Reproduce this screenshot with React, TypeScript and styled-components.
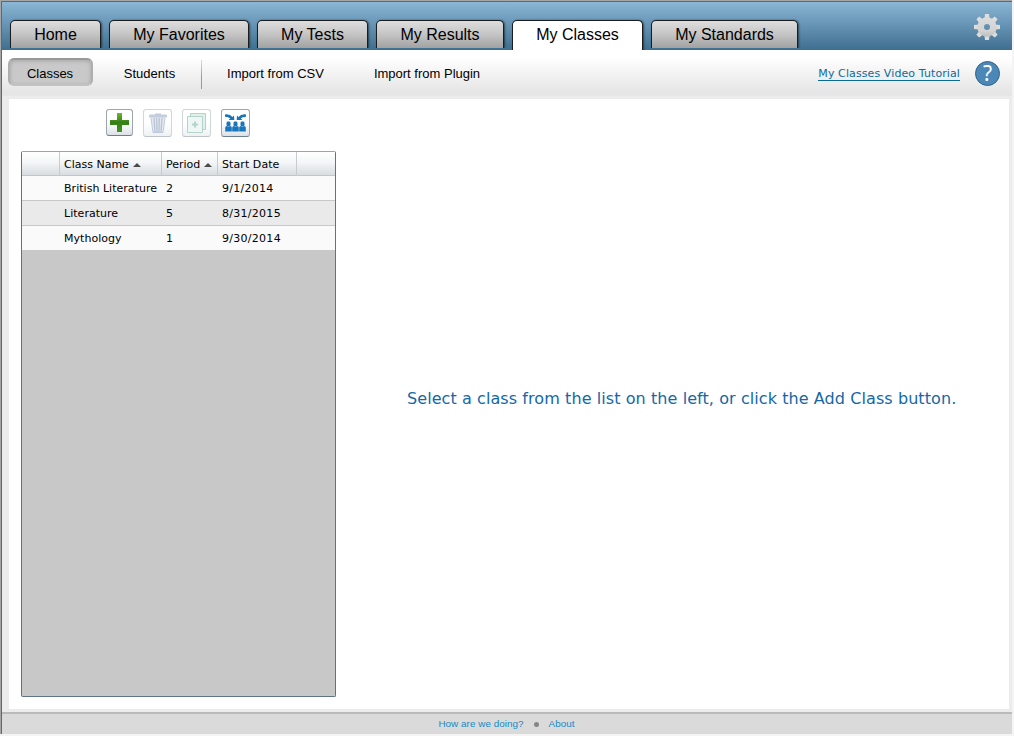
import React from "react";
import styled, { createGlobalStyle, css } from "styled-components";

const GlobalStyle = createGlobalStyle`
  *, *::before, *::after { box-sizing: border-box; }
  html, body { margin: 0; padding: 0; background: #f4f4f4; }
  body { font-family: "Liberation Sans", Arial, sans-serif; color: #000; }
`;

const verdana = css`
  font-family: "DejaVu Sans", Verdana, sans-serif;
`;

const Frame = styled.div`
  width: 1012px;
  height: 734px;
  border-top: 1px solid #a6a6a6;
  border-left: 1px solid #a6a6a6;
`;

const Window = styled.div`
  display: flex;
  flex-direction: column;
  width: 1011px;
  height: 733px;
  border-top: 1px solid #666;
  border-left: 1px solid #666;
  background: #ececec;
`;

const Header = styled.header`
  display: flex;
  justify-content: space-between;
  height: 48px;
  padding: 18px 11px 0 8px;
  background: linear-gradient(#8bb6d6, #3e6e90);
`;

const Tabs = styled.nav`
  display: flex;
  gap: 8px;
`;

const Tab = styled.button<{ $width: number; $active?: boolean }>`
  width: ${(p) => p.$width}px;
  height: ${(p) => (p.$active ? 30 : 28)}px;
  padding: 0 0 ${(p) => (p.$active ? 2 : 0)}px;
  border: 1px solid #1c1c1c;
  border-bottom: 0;
  border-radius: 5px 5px 0 0;
  background: ${(p) => (p.$active ? "#fff" : "linear-gradient(#dedede, #c4c4c4 50%, #a2a2a2)")};
  box-shadow: 1px 0 2px rgba(0, 0, 0, 0.5);
  clip-path: inset(-3px -4px 0 -3px);
  font: 16px/26px "Liberation Sans", Arial, sans-serif;
  color: #000;
`;

const GearIcon = styled.svg`
  display: block;
  width: 28px;
  height: 28px;
  margin-top: -7px;
`;

const SubBar = styled.div`
  display: flex;
  align-items: flex-start;
  height: 46px;
  padding: 8px 11px 0 6px;
  background: linear-gradient(#fff 15%, #e6e6e6 90%);
`;

const SubItem = styled.button<{ $width: number; $selected?: boolean }>`
  width: ${(p) => p.$width}px;
  height: 28px;
  padding: 2px 0 0;
  border: 0;
  border-radius: 6px;
  background: none;
  font: 13px/28px "Liberation Sans", Arial, sans-serif;
  color: #000;
  white-space: nowrap;
  ${(p) =>
    p.$selected &&
    css`
      background: #c9c9c9;
      border: 2px solid #aeaeae;
      border-top-color: #999;
      border-bottom-color: #c2c2c2;
      padding: 2px 1px 0 0;
      line-height: 24px;
      box-shadow: inset 0 1px 4px rgba(0, 0, 0, 0.18);
    `}
`;

const Divider = styled.div`
  width: 1px;
  height: 29px;
  margin: 2px 0 0 -5px;
  background: linear-gradient(#ddd, #999 60%);
`;

const Tutorial = styled.a`
  ${verdana}
  margin: 8px 15px 0 auto;
  height: 15px;
  border-bottom: 1px solid #0b6b9e;
  font-size: 11px;
  line-height: 15px;
  letter-spacing: 0.1px;
  color: #0b6b9e;
`;

const Help = styled.button`
  width: 25px;
  height: 25px;
  margin: 3px 1px 0 0;
  padding: 0;
  border: 1px solid #2f638b;
  border-radius: 50%;
  background: #4b88b8;
  font: 21px/23px "Noto Sans", Verdana, sans-serif;
  color: #fff;
`;

const Content = styled.main`
  display: flex;
  width: 1000px;
  height: 610px;
  margin: 3px 0 0 7px;
  background: #fff;
`;

const ListPane = styled.section`
  width: 327px;
  padding: 10px 0 0 12px;
`;

const Toolbar = styled.div`
  display: flex;
  gap: 10px;
  height: 42px;
  padding-left: 85px;
`;

const ToolButton = styled.button<{ $width: number; $disabled?: boolean }>`
  display: grid;
  place-items: center;
  width: ${(p) => p.$width}px;
  height: ${(p) => (p.$width === 27 ? 27 : 28)}px;
  padding: 0;
  border: 1px solid #9aa6b2;
  border-bottom-color: #6d7e8c;
  border-radius: 3px;
  background: linear-gradient(#fff, #fff 50%, #dde1e6);
  opacity: ${(p) => (p.$disabled ? 0.45 : 1)};
`;

const Table = styled.div`
  ${verdana}
  width: 315px;
  height: 546px;
  border: 1px solid #5f7482;
  border-top-color: #98a5b0;
  border-radius: 2px;
  background: #c8c8c8;
  font-size: 11px;
`;

const columns = css`
  display: grid;
  grid-template-columns: 38px 102px 56px 79px 1fr;
`;

const HeadRow = styled.div`
  ${columns}
  height: 24px;
  border-bottom: 1px solid #c3c6c9;
  background: linear-gradient(#fff, #f4f6f7 45%, #d8dde2);
  line-height: 23px;
`;

const HeadCell = styled.div`
  display: flex;
  align-items: center;
  gap: 4px;
  padding: 1px 0 0 4px;
  border-right: 1px solid #c8cbce;
  white-space: nowrap;
  &:last-child { border-right: 0; }
`;

const Arrow = styled.span`
  width: 0;
  height: 0;
  border: 4px solid transparent;
  border-top: 0;
  border-bottom: 4px solid #4a4a4a;
`;

const Row = styled.div<{ $alt?: boolean }>`
  ${columns}
  height: 25px;
  border-bottom: 1px solid #c8c8c8;
  background: ${(p) => (p.$alt ? "#eaeaea" : "#fafafa")};
  line-height: 24px;
`;

const Cell = styled.div`
  padding: 1px 0 0 4px;
  white-space: nowrap;
`;

const Text = styled.span<{ $spacing?: number }>`
  letter-spacing: ${(p) => p.$spacing ?? 0}px;
`;

const Message = styled.section`
  ${verdana}
  flex: 1;
  padding: 289px 0 0 71px;
  font-size: 16px;
  line-height: 22px;
  white-space: nowrap;
  color: #1368a8;
`;

const Footer = styled.footer`
  display: flex;
  justify-content: center;
  align-items: center;
  gap: 10px;
  height: 22px;
  margin-top: 3px;
  padding: 0 1px 1px 0;
  border-top: 2px solid #bababa;
  background: #dadada;
  font-size: 9.9px;
  letter-spacing: 0.04px;
  color: #168ac6;
`;

const Dot = styled.span`
  width: 5px;
  height: 5px;
  margin-top: 2px;
  border-radius: 50%;
  background: #858585;
`;

const tabs = [
  { label: "Home", width: 91 },
  { label: "My Favorites", width: 140 },
  { label: "My Tests", width: 111 },
  { label: "My Results", width: 128 },
  { label: "My Classes", width: 131, active: true },
  { label: "My Standards", width: 147 },
];

const classes = [
  { name: "British Literature", period: "2", start: "9/1/2014" },
  { name: "Literature", period: "5", start: "8/31/2015" },
  { name: "Mythology", period: "1", start: "9/30/2014" },
];

const Gear = () => (
  <GearIcon viewBox="-14 -14 28 28">
    <defs>
      <linearGradient id="gear" x1="0" y1="-13" x2="0" y2="13" gradientUnits="userSpaceOnUse">
        <stop offset="0" stopColor="#dedede" />
        <stop offset="0.65" stopColor="#d3d3d3" />
        <stop offset="1" stopColor="#b4b4b4" />
      </linearGradient>
    </defs>
    <g fill="url(#gear)">
      {[0, 45, 90, 135, 180, 225, 270, 315].map((a) => (
        <path key={a} d="M-2.6-8L-2-13H2L2.6-8Z" transform={`rotate(${a})`} />
      ))}
      <path
        fillRule="evenodd"
        d="M0-9.7A9.7 9.7 0 1 1 0 9.7A9.7 9.7 0 1 1 0-9.7ZM0-3A3 3 0 1 0 0 3A3 3 0 1 0 0-3Z"
      />
    </g>
  </GearIcon>
);

const Plus = () => (
  <svg width="21" height="21" viewBox="0 0 21 21">
    <defs>
      <linearGradient id="plus" x1="0" y1="0" x2="0" y2="1">
        <stop offset="0" stopColor="#70b92e" />
        <stop offset="0.5" stopColor="#347f16" />
        <stop offset="1" stopColor="#3f961d" />
      </linearGradient>
    </defs>
    <path d="M8 1h5v7h7v5h-7v7H8v-7H1V8h7Z" fill="url(#plus)" />
  </svg>
);

const Trash = () => (
  <svg width="22" height="22" viewBox="0 0 22 22">
    <path d="M4 5h14l-2 16H6Z" fill="#c9d3e4" />
    <path d="M2 3.500Q2 2.500 4 2.500H8V1.500h6v1h4q2 0 2 1v2H2Z" fill="#7993b5" />
    <path d="M7 6l1 14M9.700 6l.3 14M12.300 6l-.3 14M15 6l-1 14" stroke="#5f7ba2" strokeWidth="1.3" />
    <path d="M4 6L6 20.500h10L18 6" fill="none" stroke="#6f8aad" />
  </svg>
);

const Copy = () => (
  <svg width="21" height="22" viewBox="0 0 21 22" fill="#d9eee9" stroke="#5c9c8d">
    <path d="M4.500 1.500h15v16h-15Z" fill="#b9e2d0" />
    <path d="M1.500 4.500h15v16h-15Z" />
    <path d="M6 12.500h6M9 9.500v6" strokeWidth="2" />
  </svg>
);

const Roster = () => (
  <svg width="23" height="22" viewBox="0 0 23 22" fill="#1976bd">
    <path d="M1 2.500Q6 1.800 8.500 5L10 3.500L10.300 8H4.500L6.300 6.500Q4.500 4.800 1 4.700ZM22 2.500Q17 1.800 14.500 5L13 3.500L12.700 8H18.500L16.700 6.500Q18.500 4.800 22 4.700Z" />
    {[4.5, 11.5, 18.5].map((x) => (
      <g key={x} transform={`translate(${x} 0)`}>
        <rect x="-2" y="9.500" width="4" height="5" rx="1.400" />
        <path d="M-3.300 19.500V15.500Q-3.300 14.300-1.500 14L0 15L1.500 14Q3.300 14.300 3.300 15.500V19.500Z" />
      </g>
    ))}
  </svg>
);

export default function App() {
  return (
    <>
      <GlobalStyle />
      <Frame>
        <Window>
          <Header>
            <Tabs>
              {tabs.map((t) => (
                <Tab key={t.label} $width={t.width} $active={t.active}>
                  {t.label}
                </Tab>
              ))}
            </Tabs>
            <Gear />
          </Header>
          <SubBar>
            <SubItem $width={85} $selected>Classes</SubItem>
            <SubItem $width={113}>Students</SubItem>
            <Divider />
            <SubItem $width={147}>Import from CSV</SubItem>
            <SubItem $width={156}>Import from Plugin</SubItem>
            <Tutorial>My Classes Video Tutorial</Tutorial>
            <Help>?</Help>
          </SubBar>
          <Content>
            <ListPane>
              <Toolbar>
                <ToolButton $width={27} aria-label="Add class"><Plus /></ToolButton>
                <ToolButton $width={29} $disabled aria-label="Delete"><Trash /></ToolButton>
                <ToolButton $width={29} $disabled aria-label="Copy"><Copy /></ToolButton>
                <ToolButton $width={29} aria-label="Combine classes"><Roster /></ToolButton>
              </Toolbar>
              <Table>
                <HeadRow>
                  <HeadCell />
                  <HeadCell><Text>Class Name</Text><Arrow /></HeadCell>
                  <HeadCell><Text>Period</Text><Arrow /></HeadCell>
                  <HeadCell><Text $spacing={0.08}>Start Date</Text></HeadCell>
                  <HeadCell />
                </HeadRow>
                {classes.map((c, i) => (
                  <Row key={c.name} $alt={i % 2 === 1}>
                    <Cell />
                    <Cell><Text $spacing={0.03}>{c.name}</Text></Cell>
                    <Cell><Text>{c.period}</Text></Cell>
                    <Cell><Text $spacing={0.28}>{c.start}</Text></Cell>
                    <Cell />
                  </Row>
                ))}
              </Table>
            </ListPane>
            <Message>
              <Text $spacing={0.08}>Select a class from the list on the left, or click the Add Class button.</Text>
            </Message>
          </Content>
          <Footer>
            <span>How are we doing?</span>
            <Dot />
            <span>About</span>
          </Footer>
        </Window>
      </Frame>
    </>
  );
}
